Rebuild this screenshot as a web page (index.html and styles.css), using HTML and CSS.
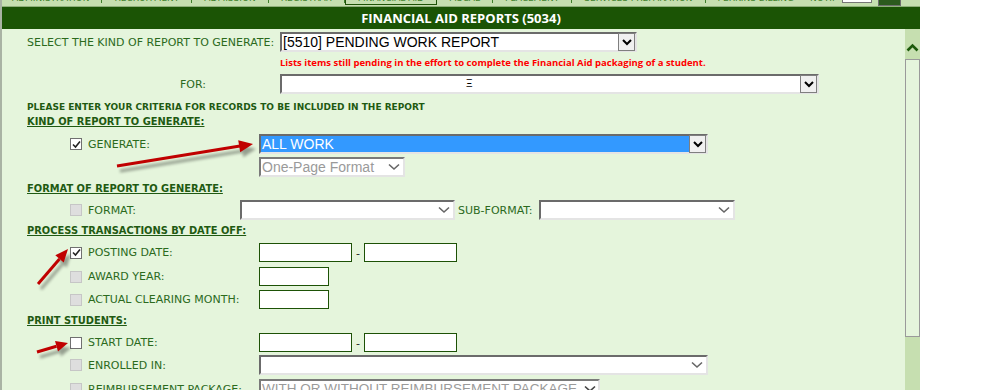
FILE: index.html
```html
<!DOCTYPE html>
<html>
<head>
    <title>Financial Aid Reports</title>
    <link rel="stylesheet" href="styles.css">
</head>
<body>

<div class="frame">
    <!-- Module tabs (mostly scrolled off the top) -->
    <div class="tabs">
        <div class="tabs-row">
            <span class="tab">ADMINISTRATION</span>
            <span class="tab">RECRUITMENT</span>
            <span class="tab">ADMISSION</span>
            <span class="tab">REGISTRAR</span>
            <span class="tab active">FINANCIAL AID</span>
            <span class="tab">FISCAL</span>
            <span class="tab">PLACEMENT</span>
            <span class="tab">SERVICES PREPARATION</span>
            <span class="tab last">PERKINS BILLING</span>
            <span class="tab-notif">NOTIF</span>
            <span class="tab-input"></span>
            <span class="tab-go"></span>
        </div>
    </div>

    <div class="titlebar">FINANCIAL AID REPORTS (5034)</div>

    <div class="body">
        <div class="content">
            <div class="row row-top">
                <label class="top-label">SELECT THE KIND OF REPORT TO GENERATE:</label>
                <div class="select w-report">
                    <span class="select-text">[5510] PENDING WORK REPORT</span>
                    <span class="select-btn"><svg width="10" height="8" viewBox="0 0 10 8"><polyline points="1,2 5,6 9,2" fill="none" stroke="#000" stroke-width="2"/></svg></span>
                </div>
            </div>

            <div class="note">Lists items still pending in the effort to complete the Financial Aid packaging of a student.</div>

            <div class="row row-for">
                <label class="top-label for-label">FOR:</label>
                <div class="select w-for">
                    <span class="select-text redacted">Ξ</span>
                    <span class="select-btn"><svg width="10" height="8" viewBox="0 0 10 8"><polyline points="1,2 5,6 9,2" fill="none" stroke="#000" stroke-width="2"/></svg></span>
                </div>
            </div>

            <div class="intro">PLEASE ENTER YOUR CRITERIA FOR RECORDS TO BE INCLUDED IN THE REPORT</div>
            <div class="heading h-kind">KIND OF REPORT TO GENERATE:</div>

            <div class="field f-generate">
                <span class="check checked"><svg width="9" height="9" viewBox="0 0 9 9"><polyline points="1,4.5 3.5,7 8,1.5" fill="none" stroke="#222" stroke-width="1.6"/></svg></span>
                <label class="field-label">GENERATE:</label>
                <div class="select w-wide selected">
                    <span class="select-text">ALL WORK</span>
                    <span class="select-btn"><svg width="10" height="8" viewBox="0 0 10 8"><polyline points="1,2 5,6 9,2" fill="none" stroke="#000" stroke-width="2"/></svg></span>
                </div>
            </div>
            <div class="field f-onepage">
                <span class="check-space"></span>
                <span class="field-label"></span>
                <div class="select w-onepage disabled">
                    <span class="select-text">One-Page Format</span>
                    <span class="select-arrow"><svg width="12" height="8" viewBox="0 0 12 8"><polyline points="1,1.5 6,6 11,1.5" fill="none" stroke="#666" stroke-width="1.6"/></svg></span>
                </div>
            </div>

            <div class="heading h-format">FORMAT OF REPORT TO GENERATE:</div>
            <div class="field f-format">
                <span class="check off"></span>
                <label class="field-label short">FORMAT:</label>
                <div class="select w-format">
                    <span class="select-text"></span>
                    <span class="select-arrow"><svg width="12" height="8" viewBox="0 0 12 8"><polyline points="1,1.5 6,6 11,1.5" fill="none" stroke="#666" stroke-width="1.6"/></svg></span>
                </div>
                <label class="sub-label">SUB-FORMAT:</label>
                <div class="select w-sub">
                    <span class="select-text"></span>
                    <span class="select-arrow"><svg width="12" height="8" viewBox="0 0 12 8"><polyline points="1,1.5 6,6 11,1.5" fill="none" stroke="#666" stroke-width="1.6"/></svg></span>
                </div>
            </div>

            <div class="heading h-process">PROCESS TRANSACTIONS BY DATE OFF:</div>
            <div class="field f-posting">
                <span class="check checked"><svg width="9" height="9" viewBox="0 0 9 9"><polyline points="1,4.5 3.5,7 8,1.5" fill="none" stroke="#222" stroke-width="1.6"/></svg></span>
                <label class="field-label">POSTING DATE:</label>
                <input class="text w-date" type="text">
                <span class="dash">-</span>
                <input class="text w-date" type="text">
            </div>
            <div class="field f-award">
                <span class="check off"></span>
                <label class="field-label">AWARD YEAR:</label>
                <input class="text w-short" type="text">
            </div>
            <div class="field f-clearing">
                <span class="check off"></span>
                <label class="field-label">ACTUAL CLEARING MONTH:</label>
                <input class="text w-short" type="text">
            </div>

            <div class="heading h-print">PRINT STUDENTS:</div>
            <div class="field f-start">
                <span class="check"></span>
                <label class="field-label">START DATE:</label>
                <input class="text w-date" type="text">
                <span class="dash">-</span>
                <input class="text w-date" type="text">
            </div>
            <div class="field f-enrolled">
                <span class="check off"></span>
                <label class="field-label">ENROLLED IN:</label>
                <div class="select w-wide">
                    <span class="select-text"></span>
                    <span class="select-arrow"><svg width="12" height="8" viewBox="0 0 12 8"><polyline points="1,1.5 6,6 11,1.5" fill="none" stroke="#666" stroke-width="1.6"/></svg></span>
                </div>
            </div>
            <div class="field f-reimb">
                <span class="check off"></span>
                <label class="field-label">REIMBURSEMENT PACKAGE:</label>
                <div class="select w-reimb disabled">
                    <span class="select-text">WITH OR WITHOUT REIMBURSEMENT PACKAGE</span>
                    <span class="select-arrow"><svg width="12" height="8" viewBox="0 0 12 8"><polyline points="1,1.5 6,6 11,1.5" fill="none" stroke="#444" stroke-width="1.6"/></svg></span>
                </div>
            </div>
        </div>

        <!-- Frame scrollbar -->
        <div class="scroll">
            <div class="scroll-up"><svg width="13" height="9" viewBox="0 0 13 9"><polyline points="1.5,7.5 6.5,2.5 11.5,7.5" fill="none" stroke="#1d5a0c" stroke-width="2.6"/></svg></div>
            <div class="scroll-thumb"></div>
        </div>
    </div>
</div>

<!-- Red annotation arrows drawn over the form -->
<svg class="annotations" width="988" height="390" viewBox="0 0 988 390">
    <defs>
        <filter id="soft" x="-20%" y="-20%" width="140%" height="140%">
            <feGaussianBlur stdDeviation="1.6"/>
        </filter>
    </defs>
    <g fill="#000" stroke="#000" opacity="0.35" filter="url(#soft)" transform="translate(3,5)">
        <line x1="117" y1="166" x2="240" y2="146" stroke-width="3"/>
        <polygon points="253,144 240.2,152.2 238.2,140.3" stroke="none"/>
        <line x1="38" y1="284" x2="59.5" y2="259" stroke-width="3"/>
        <polygon points="68,249 63.7,262.5 55.3,255.3" stroke="none"/>
        <line x1="37" y1="352" x2="56.5" y2="346.3" stroke-width="3"/>
        <polygon points="68,343 58,351.6 55,341" stroke="none"/>
    </g>
    <g fill="#c00000" stroke="#c00000">
        <line x1="117" y1="166" x2="240" y2="146" stroke-width="3"/>
        <polygon points="253,144 240.2,152.2 238.2,140.3" stroke="none"/>
        <line x1="38" y1="284" x2="59.5" y2="259" stroke-width="3"/>
        <polygon points="68,249 63.7,262.5 55.3,255.3" stroke="none"/>
        <line x1="37" y1="352" x2="56.5" y2="346.3" stroke-width="3"/>
        <polygon points="68,343 58,351.6 55,341" stroke="none"/>
    </g>
</svg>

</body>
</html>
```

FILE: styles.css
```css
/* Reset */
* {
    margin: 0;
    padding: 0;
    box-sizing: border-box;
}

body {
    position: relative;
    width: 988px;
    height: 390px;
    overflow: hidden;
    background: #ffffff;
    font-family: "DejaVu Sans", Verdana, sans-serif;
    font-size: 11px;
    color: #2b6a1d;
}

/* Outer frame */
.frame {
    width: 920px;
    height: 390px;
    border-left: 2px solid #a9b3a4;
    display: flex;
    flex-direction: column;
    overflow: hidden;
}

/* Tabs strip */
.tabs {
    flex-shrink: 0;
    height: 7px;
    background: #c6dfb0;
    overflow: hidden;
    border-bottom: 1px solid #8fb07a;
}

.tabs-row {
    display: flex;
    align-items: flex-start;
    margin-top: -7px;
    height: 12px;
    line-height: 11px;
    font-size: 9px;
    color: #3f7f2c;
    white-space: nowrap;
}

.tab {
    padding: 0 12px;
    border-right: 1px solid #3f7f2c;
    height: 10px;
}

.tab:first-child {
    padding-left: 10px;
}

.tab.active {
    border: 1px solid #1d5206;
    border-top: none;
    background: #c6dfb0;
    height: 12px;
}

.tab.last {
    border-right: none;
}

.tab-notif {
    padding-left: 4px;
}

.tab-input {
    width: 30px;
    height: 10px;
    margin-left: 5px;
    background: #ffffff;
    border: 1px solid #777;
}

.tab-go {
    width: 23px;
    height: 13px;
    margin-left: 6px;
    background: #2c5a1e;
    border: 1px solid #6f6f6f;
}

/* Title bar */
.titlebar {
    flex-shrink: 0;
    height: 22px;
    background: #1b5405;
    color: #ffffff;
    font-family: "Open Sans", sans-serif;
    font-weight: bold;
    font-size: 13px;
    line-height: 22px;
    text-align: center;
}

/* Body: form + scrollbar */
.body {
    flex: 1;
    min-height: 0;
    display: flex;
}

.content {
    flex: 1;
    background: #e5f5dc;
    padding: 3px 0 0 25px;
    overflow: hidden;
}

.scroll {
    width: 15px;
    background: #c6dfb0;
    display: flex;
    flex-direction: column;
}

.scroll-up {
    flex-shrink: 0;
    height: 30px;
    display: flex;
    align-items: center;
    justify-content: center;
    padding-top: 6px;
}

.scroll-thumb {
    flex-shrink: 0;
    height: 278px;
    background: #e5f5dc;
    border: 1px solid #9a9a9a;
}

/* Top rows */
.row {
    display: flex;
    align-items: center;
    height: 20px;
}

.top-label {
    width: 253px;
    white-space: nowrap;
}

.for-label {
    padding-left: 153px;
}

.row-for {
    margin-top: 5px;
}

.note {
    margin: 5px 0 0 253px;
    height: 12px;
    line-height: 12px;
    font-family: "Open Sans", sans-serif;
    font-weight: bold;
    font-size: 9.5px;
    color: #ff0000;
    white-space: nowrap;
}

.intro {
    margin-top: 7px;
    height: 12px;
    line-height: 12px;
    font-weight: bold;
    font-size: 9px;
    color: #1f5a12;
    white-space: nowrap;
}

.heading {
    height: 12px;
    line-height: 12px;
    font-weight: bold;
    font-size: 9.9px;
    color: #1f5a12;
    text-decoration: underline;
    white-space: nowrap;
}

.h-kind { margin-top: 3px; }
.h-format { margin-top: 6px; }
.h-process { margin-top: 5px; }
.h-print { margin-top: 6px; }

/* Indented criteria rows */
.field {
    display: flex;
    align-items: center;
    height: 20px;
    padding-left: 43px;
}

.f-generate { margin-top: 6px; }
.f-onepage { margin-top: 3px; }
.f-format { margin-top: 5px; }
.f-posting { margin-top: 6px; height: 19px; }
.f-award { margin-top: 5px; height: 19px; }
.f-clearing { margin-top: 4px; height: 19px; }
.f-start { margin-top: 6px; height: 19px; }
.f-enrolled { margin-top: 3px; }
.f-reimb { margin-top: 4px; }

.check,
.check-space {
    width: 12px;
    height: 12px;
    margin-right: 6px;
    flex-shrink: 0;
}

.check {
    background: #ffffff;
    border: 1px solid #707070;
    display: flex;
    align-items: center;
    justify-content: center;
}

.check.off {
    background: #dedede;
    border-color: #c6c6c6;
}

.field-label {
    width: 171px;
    white-space: nowrap;
    flex-shrink: 0;
}

.field-label.short {
    width: 152px;
}

.sub-label {
    margin: 0 6px 0 3px;
    white-space: nowrap;
}

/* Select boxes */
.select {
    flex-shrink: 0;
    height: 20px;
    display: flex;
    align-items: center;
    background: #ffffff;
    border-top: 2px solid #6b6b6b;
    border-left: 2px solid #6b6b6b;
    border-right: 2px solid #e4e4e4;
    border-bottom: 2px solid #e4e4e4;
    font-family: "Liberation Sans", Arial, sans-serif;
    font-size: 14px;
    color: #000000;
}

.select-text {
    flex: 1;
    padding-left: 1px;
    white-space: nowrap;
    overflow: hidden;
    line-height: 16px;
}

.select-btn {
    width: 17px;
    height: 18px;
    margin-top: -2px;
    margin-bottom: -2px;
    background: #f0f0f0;
    border: 1px solid #7f7f7f;
    display: flex;
    align-items: center;
    justify-content: center;
}

.select-arrow {
    width: 18px;
    display: flex;
    align-items: center;
    justify-content: center;
}

.select.selected .select-text {
    background: #3399ff;
    color: #ffffff;
    height: 16px;
    padding-left: 1px;
}

.select.disabled {
    color: #9a9a9a;
    border-top-color: #7a7a7a;
    border-left-color: #7a7a7a;
}

.redacted {
    padding-left: 184px;
    font-size: 10px;
}

.w-report { width: 357px; }
.w-for { width: 539px; }
.w-wide { width: 449px; }
.w-onepage { width: 146px; }
.w-format { width: 215px; }
.w-sub { width: 196px; }
.w-reimb { width: 341px; font-size: 13.5px; }

.w-reimb .select-arrow {
    width: 16px;
}

/* Text inputs */
.text {
    flex-shrink: 0;
    height: 19px;
    background: #ffffff;
    border: 1px solid #1d5206;
    outline: none;
}

.w-date { width: 93px; }
.w-short { width: 70px; }

.dash {
    width: 12px;
    text-align: center;
    color: #222;
    padding-top: 2px;
}

/* Annotation overlay */
.annotations {
    position: absolute;
    left: 0;
    top: 0;
    pointer-events: none;
}
```
